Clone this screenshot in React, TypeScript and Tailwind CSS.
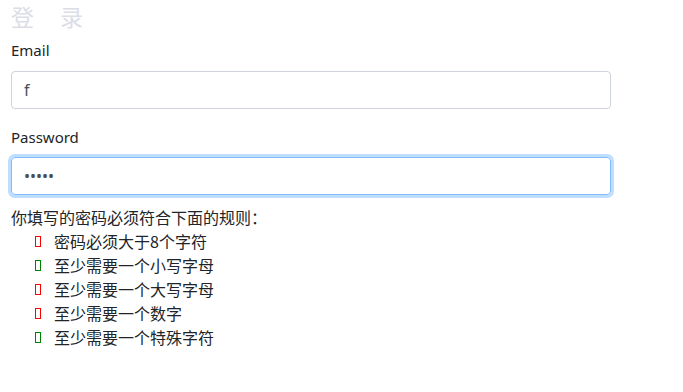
export default function App() {
  const rules = [
    { text: "密码必须大于8个字符", ok: false },
    { text: "至少需要一个小写字母", ok: true },
    { text: "至少需要一个大写字母", ok: false },
    { text: "至少需要一个数字", ok: false },
    { text: "至少需要一个特殊字符", ok: true },
  ];

  return (
    <div className="min-h-screen bg-white px-[11px] text-[#212529] font-['Segoe_UI','Noto_Sans','Noto_Sans_CJK_SC',sans-serif] text-[15px]">
      <div className="flex h-[38px] items-start gap-[26px] text-[23px] leading-[32px] text-[#dcdde6] font-['Noto_Sans_CJK_SC',sans-serif]">
        <span>登</span>
        <span>录</span>
      </div>

      <form className="w-[600px]">
        <div className="mb-4">
          <label className="mb-[9px] block leading-[24px]">Email</label>
          <input
            type="email"
            defaultValue="f"
            className="block h-[38px] w-full rounded-[4px] border border-[#ced4da] px-3 text-[16px] text-[#495057] outline-none"
          />
        </div>

        <div>
          <label className="mb-2 block leading-[24px]">Password</label>
          <input
            type="password"
            defaultValue="12345"
            className="block h-[38px] w-full rounded-[4px] border border-[#80bdff] px-3 text-[16px] text-[#495057] outline-none shadow-[0_0_0_3px_rgba(0,123,255,0.25)]"
          />
        </div>
      </form>

      <div className="mt-[10px] font-['Noto_Sans_CJK_SC',sans-serif] text-[16px] leading-[24px]">
        <p>你填写的密码必须符合下面的规则：</p>
        <ul className="pl-6">
          {rules.map((r) => (
            <li key={r.text} className="flex items-center">
              <span
                className={
                  r.ok
                    ? "mr-[13px] inline-block h-[11px] w-[6px] border border-[#008000]"
                    : "mr-[13px] inline-block h-[11px] w-[6px] border border-[#ff0000]"
                }
              />
              {r.text}
            </li>
          ))}
        </ul>
      </div>
    </div>
  );
}
